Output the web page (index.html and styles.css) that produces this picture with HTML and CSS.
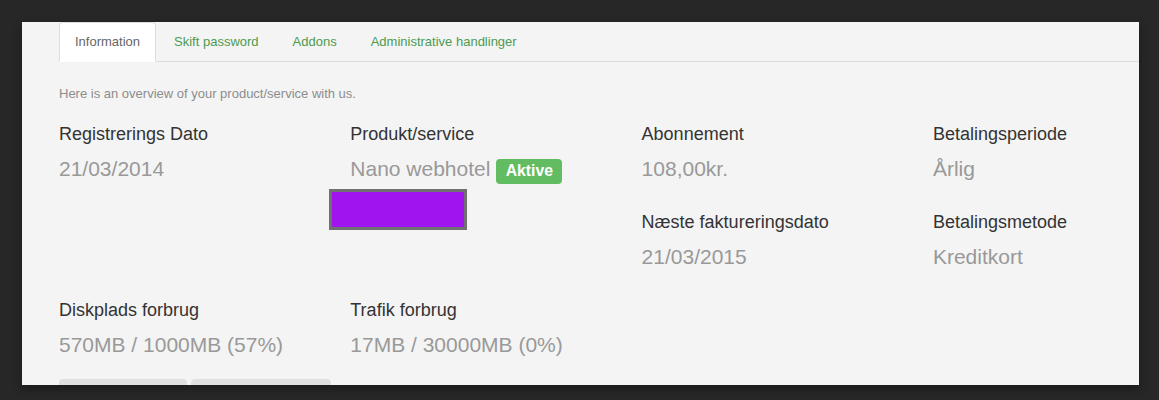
FILE: index.html
```html
<!DOCTYPE html>
<html lang="da">
<head>
<meta charset="utf-8">
<title>Product overview</title>
<link rel="stylesheet" href="styles.css">
</head>
<body>
<div class="panel">
  <ul class="tabs">
    <li class="tab active"><a href="#">Information</a></li>
    <li class="tab"><a href="#">Skift password</a></li>
    <li class="tab"><a href="#">Addons</a></li>
    <li class="tab"><a href="#">Administrative handlinger</a></li>
  </ul>
  <div class="content">
    <p class="intro">Here is an overview of your product/service with us.</p>
    <div class="grid">
      <div class="col">
        <div class="item">
          <div class="label">Registrerings Dato</div>
          <div class="value">21/03/2014</div>
        </div>
      </div>
      <div class="col">
        <div class="item">
          <div class="label">Produkt/service</div>
          <div class="value">Nano webhotel <span class="badge">Aktive</span></div>
          <div class="redact"></div>
        </div>
      </div>
      <div class="col">
        <div class="item">
          <div class="label">Abonnement</div>
          <div class="value">108,00kr.</div>
        </div>
        <div class="item">
          <div class="label">Næste faktureringsdato</div>
          <div class="value">21/03/2015</div>
        </div>
      </div>
      <div class="col">
        <div class="item">
          <div class="label">Betalingsperiode</div>
          <div class="value">Årlig</div>
        </div>
        <div class="item">
          <div class="label">Betalingsmetode</div>
          <div class="value">Kreditkort</div>
        </div>
      </div>
    </div>
    <div class="grid">
      <div class="col">
        <div class="item">
          <div class="label">Diskplads forbrug</div>
          <div class="value">570MB / 1000MB (57%)</div>
        </div>
      </div>
      <div class="col">
        <div class="item">
          <div class="label">Trafik forbrug</div>
          <div class="value">17MB / 30000MB (0%)</div>
        </div>
      </div>
    </div>
    <div class="buttons">
      <span class="btn btn-a"></span>
      <span class="btn btn-b"></span>
    </div>
  </div>
</div>
</body>
</html>
```

FILE: styles.css
```css
html, body {
  margin: 0;
  padding: 0;
}
body {
  background: #272727;
  font-family: "Liberation Sans", Arial, sans-serif;
  padding: 22px 20px 0 22px;
  height: 400px;
  box-sizing: border-box;
  overflow: hidden;
}
.panel {
  width: 1117px;
  height: 363px;
  background: #f4f4f4;
  overflow: hidden;
  box-shadow: 0 4px 8px rgba(0, 0, 0, 0.35);
}
.tabs {
  list-style: none;
  margin: 0 0 0 37px;
  padding: 0;
  display: flex;
  border-bottom: 1px solid #dddddd;
  font-size: 13px;
  line-height: 18px;
}
.tab {
  margin-bottom: -1px;
}
.tab a {
  display: block;
  padding: 10px 15px;
  margin-right: 2px;
  border: 1px solid transparent;
  border-radius: 4px 4px 0 0;
  color: #4e9a50;
  text-decoration: none;
}
.tab.active a {
  background: #ffffff;
  border-color: #dddddd #dddddd transparent;
  color: #666666;
}
.content {
  padding-left: 37px;
}
.intro {
  margin: 23px 0 20px;
  font-size: 13px;
  line-height: 18px;
  color: #8c8c8c;
}
.grid {
  display: grid;
  grid-template-columns: repeat(4, 291.3px);
  align-items: start;
}
.item {
  height: 88px;
}
.label {
  font-size: 18px;
  line-height: 22px;
  color: #333333;
  margin-bottom: 11px;
}
.value {
  font-size: 21px;
  line-height: 26px;
  color: #999999;
  white-space: nowrap;
}
.badge {
  display: inline;
  background: #62bc62;
  color: #ffffff;
  font-size: 75%;
  font-weight: bold;
  line-height: 1;
  padding: 0.2em 0.6em 0.3em;
  border-radius: 0.25em;
  vertical-align: baseline;
}
.redact {
  width: 132px;
  height: 35px;
  margin: 7px 0 0 -21px;
  background: #a014ef;
  border: 3px solid #707070;
}
.buttons {
  display: flex;
  gap: 4px;
  margin-top: -8px;
}
.btn {
  display: block;
  height: 30px;
  background: #dfdfdf;
  border-radius: 4px;
}
.btn-a {
  width: 128px;
}
.btn-b {
  width: 140px;
}
```
